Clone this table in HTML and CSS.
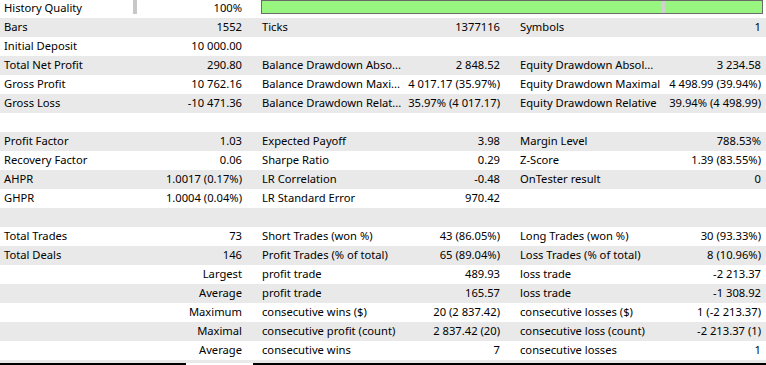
FILE: index.html
```html
<!DOCTYPE html>
<html>
<head>
<meta charset="utf-8">
<link rel="stylesheet" href="styles.css">
</head>
<body>
<div class="report">
  <div class="row">
    <div class="a1">History Quality</div>
    <div class="b1 quality"><span class="marker"></span><span>100%</span></div>
    <div class="bar"><span class="seg first"></span><span class="sep"></span><span class="seg rest"></span></div>
  </div>
  <div class="row">
    <div class="a1">Bars</div><div class="b1">1552</div>
    <div class="a2">Ticks</div><div class="b2">1377116</div>
    <div class="a3">Symbols</div><div class="b3">1</div>
  </div>
  <div class="row">
    <div class="a1">Initial Deposit</div><div class="b1">10 000.00</div>
    <div class="a2"></div><div class="b2"></div>
    <div class="a3"></div><div class="b3"></div>
  </div>
  <div class="row">
    <div class="a1">Total Net Profit</div><div class="b1">290.80</div>
    <div class="a2">Balance Drawdown Abso...</div><div class="b2">2 848.52</div>
    <div class="a3">Equity Drawdown Absol...</div><div class="b3">3 234.58</div>
  </div>
  <div class="row">
    <div class="a1">Gross Profit</div><div class="b1">10 762.16</div>
    <div class="a2">Balance Drawdown Maxi...</div><div class="b2">4 017.17 (35.97%)</div>
    <div class="a3">Equity Drawdown Maximal</div><div class="b3">4 498.99 (39.94%)</div>
  </div>
  <div class="row">
    <div class="a1">Gross Loss</div><div class="b1">-10 471.36</div>
    <div class="a2">Balance Drawdown Relat...</div><div class="b2">35.97% (4 017.17)</div>
    <div class="a3">Equity Drawdown Relative</div><div class="b3">39.94% (4 498.99)</div>
  </div>
  <div class="row"></div>
  <div class="row">
    <div class="a1">Profit Factor</div><div class="b1">1.03</div>
    <div class="a2">Expected Payoff</div><div class="b2">3.98</div>
    <div class="a3">Margin Level</div><div class="b3">788.53%</div>
  </div>
  <div class="row">
    <div class="a1">Recovery Factor</div><div class="b1">0.06</div>
    <div class="a2">Sharpe Ratio</div><div class="b2">0.29</div>
    <div class="a3">Z-Score</div><div class="b3">1.39 (83.55%)</div>
  </div>
  <div class="row">
    <div class="a1">AHPR</div><div class="b1">1.0017 (0.17%)</div>
    <div class="a2">LR Correlation</div><div class="b2">-0.48</div>
    <div class="a3">OnTester result</div><div class="b3">0</div>
  </div>
  <div class="row">
    <div class="a1">GHPR</div><div class="b1">1.0004 (0.04%)</div>
    <div class="a2">LR Standard Error</div><div class="b2">970.42</div>
    <div class="a3"></div><div class="b3"></div>
  </div>
  <div class="row"></div>
  <div class="row">
    <div class="a1">Total Trades</div><div class="b1">73</div>
    <div class="a2">Short Trades (won %)</div><div class="b2">43 (86.05%)</div>
    <div class="a3">Long Trades (won %)</div><div class="b3">30 (93.33%)</div>
  </div>
  <div class="row">
    <div class="a1">Total Deals</div><div class="b1">146</div>
    <div class="a2">Profit Trades (% of total)</div><div class="b2">65 (89.04%)</div>
    <div class="a3">Loss Trades (% of total)</div><div class="b3">8 (10.96%)</div>
  </div>
  <div class="row">
    <div class="a1"></div><div class="b1">Largest</div>
    <div class="a2">profit trade</div><div class="b2">489.93</div>
    <div class="a3">loss trade</div><div class="b3">-2 213.37</div>
  </div>
  <div class="row">
    <div class="a1"></div><div class="b1">Average</div>
    <div class="a2">profit trade</div><div class="b2">165.57</div>
    <div class="a3">loss trade</div><div class="b3">-1 308.92</div>
  </div>
  <div class="row">
    <div class="a1"></div><div class="b1">Maximum</div>
    <div class="a2">consecutive wins ($)</div><div class="b2">20 (2 837.42)</div>
    <div class="a3">consecutive losses ($)</div><div class="b3">1 (-2 213.37)</div>
  </div>
  <div class="row">
    <div class="a1"></div><div class="b1">Maximal</div>
    <div class="a2">consecutive profit (count)</div><div class="b2">2 837.42 (20)</div>
    <div class="a3">consecutive loss (count)</div><div class="b3">-2 213.37 (1)</div>
  </div>
  <div class="row">
    <div class="a1"></div><div class="b1">Average</div>
    <div class="a2">consecutive wins</div><div class="b2">7</div>
    <div class="a3">consecutive losses</div><div class="b3">1</div>
  </div>
  <div class="row tail"></div>
  <div class="bottomline"><span class="line left"></span><span class="line right"></span></div>
</div>
</body>
</html>
```

FILE: styles.css
```css
html, body {
  margin: 0;
  padding: 0;
  background: #ffffff;
}
body {
  font-family: "Noto Sans", "DejaVu Sans", sans-serif;
  font-size: 11.2px;
  color: #000;
  width: 766px;
  height: 365px;
  overflow: hidden;
}
.report {
  margin-top: -1px;
}
.row {
  display: grid;
  grid-template-columns: 128px 126px 154px 100px 154px 104px;
  height: 19px;
  align-items: center;
  white-space: nowrap;
}
.row:nth-child(even) {
  background: #e9e9e9;
}
.row > div {
  overflow: hidden;
  height: 19px;
  line-height: 17px;
}
.a1 { padding-left: 4px; }
.b1 { text-align: right; padding-right: 12px; }
.a2 { padding-left: 8px; }
.b2 { text-align: right; padding-right: 8px; }
.a3 { padding-left: 12px; }
.b3 { text-align: right; padding-right: 5px; }

.quality {
  display: flex;
  justify-content: space-between;
}
.marker {
  display: block;
  width: 4px;
  height: 14px;
  margin-top: 1px;
  margin-left: 5px;
  background: #c8c8c8;
}
.row > .bar {
  grid-column: 3 / 7;
  align-self: start;
  margin: 1px 3px 0 7px;
  height: 14px;
  box-sizing: border-box;
  border: 1px solid #6a6a6a;
  display: flex;
  background: #98f580;
}
.seg.first { width: 399px; }
.sep { width: 4px; background: #d0d0d0; }
.seg.rest { flex: 1; }

.row.tail {
  height: 3px;
}
.bottomline {
  display: flex;
  height: 2px;
  justify-content: space-between;
}
.line {
  display: block;
  background: #000;
  height: 2px;
}
.line.left { width: 186px; }
.line.right { width: 513px; }
```
